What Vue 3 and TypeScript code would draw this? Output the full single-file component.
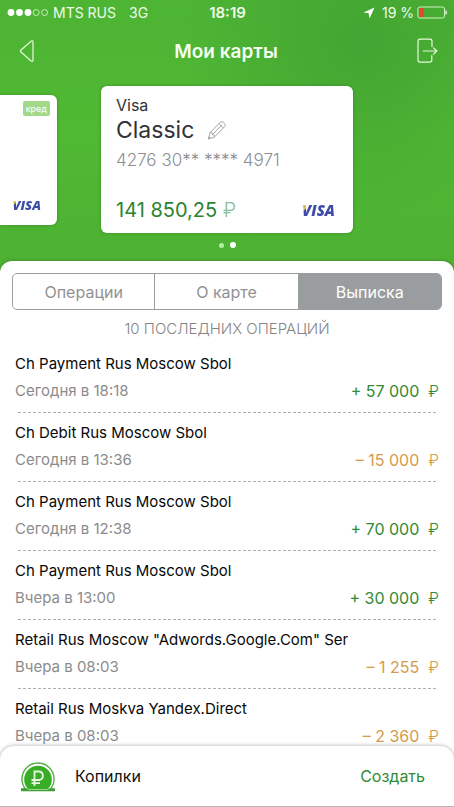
<script setup lang="ts">
import { ref } from 'vue'

interface Operation {
  id: number
  title: string
  time: string
  amount: string
  income: boolean
}

const tabs: string[] = ['Операции', 'О карте', 'Выписка']
const activeTab = ref<string>('Выписка')

const operations: Operation[] = [
  { id: 1, title: 'Ch Payment Rus Moscow Sbol', time: 'Сегодня в 18:18', amount: '+ 57 000', income: true },
  { id: 2, title: 'Ch Debit Rus Moscow Sbol', time: 'Сегодня в 13:36', amount: '– 15 000', income: false },
  { id: 3, title: 'Ch Payment Rus Moscow Sbol', time: 'Сегодня в 12:38', amount: '+ 70 000', income: true },
  { id: 4, title: 'Ch Payment Rus Moscow Sbol', time: 'Вчера в 13:00', amount: '+ 30 000', income: true },
  { id: 5, title: 'Retail Rus Moscow "Adwords.Google.Com" Ser', time: 'Вчера в 08:03', amount: '– 1 255', income: false },
  { id: 6, title: 'Retail Rus Moskva Yandex.Direct', time: 'Вчера в 08:03', amount: '– 2 360', income: false },
]
</script>

<template>
  <div class="app">
    <div class="status">
      <div class="status-left">
        <svg class="signal" width="42" height="9" viewBox="0 0 42 9">
          <g fill="#fff">
            <circle cx="4" cy="4.5" r="3.4" />
            <circle cx="12.5" cy="4.5" r="3.4" />
            <circle cx="21" cy="4.5" r="3.4" />
          </g>
          <g fill="none" stroke="#e4f6dc" stroke-width="0.8">
            <circle cx="29.2" cy="4.5" r="3" />
            <circle cx="37.6" cy="4.5" r="3" />
          </g>
        </svg>
        <span>MTS RUS</span>
        <span class="network">3G</span>
      </div>
      <div class="clock">18:19</div>
      <div class="status-right">
        <svg class="location" width="12" height="12" viewBox="0 0 12 12">
          <path d="M11.5 0.5 L0.5 5.5 L5.6 6.3 L6.6 11.5 Z" fill="#fff" />
        </svg>
        <span>19 %</span>
        <svg width="31" height="13" viewBox="0 0 31 13">
          <rect x="0.9" y="1" width="26.6" height="11" rx="2" fill="none" stroke="#d3efc6" stroke-width="1" />
          <rect x="2" y="2" width="5" height="9" rx="0.8" fill="#e2492f" />
          <path d="M28.8 4.5 Q30.6 6.5 28.8 8.5 Z" fill="#e8f8e1" stroke="#e8f8e1" stroke-width="0.6" />
        </svg>
      </div>
    </div>

    <header class="nav">
      <button class="icon-button" type="button" aria-label="Назад">
        <svg width="16" height="24" viewBox="0 0 16 24">
          <path d="M12.1 2.2 L1.7 11.2 Q1 12 1.7 12.8 L12.1 22 Q14 23 14 21 V3 Q14 1 12.1 2.2 Z" fill="none" stroke="#e6f9dc" stroke-width="1.2" stroke-linejoin="round" />
        </svg>
      </button>
      <h1>Мои карты</h1>
      <button class="icon-button" type="button" aria-label="Выход">
        <svg width="21" height="26" viewBox="0 0 21 26">
          <g fill="none" stroke="#e6f9dc" stroke-width="1.2" stroke-linecap="round" stroke-linejoin="round">
            <path d="M15 8.5 V3.3 Q15 1.2 13 1.2 H3 Q1 1.2 1 3.3 V22 Q1 24.2 3 24.2 H12.6 Q14.8 24.2 14.8 22 V17.5" />
            <path d="M6.3 13 H19.5 M16.6 9.8 L19.8 13 L16.6 16.2" />
          </g>
        </svg>
      </button>
    </header>

    <section class="carousel">
      <article class="card side-card">
        <span class="badge">кред</span>
        <span class="visa visa-small">VISA</span>
      </article>
      <article class="card main-card">
        <div class="brand">Visa</div>
        <div class="name-row">
          <span class="name">Classic</span>
          <button class="edit" type="button" aria-label="Изменить">
            <svg width="20" height="20" viewBox="0 0 20 20">
              <g fill="none" stroke="#a2a7a8" stroke-width="1" stroke-linejoin="round" stroke-linecap="round">
                <path d="M1.5 18.5 L3.2 12.5 L13.3 2.2 Q14.8 1 16.2 2.2 L17.8 3.8 Q19 5.2 17.8 6.6 L7.6 16.8 Z" />
                <path d="M3.2 12.5 L5.2 13 L5.5 14.8 L7.2 15.2 L7.6 16.8 M5.4 14.6 L15 5 M12 3.6 L16.4 8" />
                <path d="M1.5 18.5 L2 16.8 L3.2 18 Z" />
              </g>
            </svg>
          </button>
        </div>
        <div class="number">4276 30** **** 4971</div>
        <div class="balance-row">
          <span class="balance">141 850,25 <span class="currency">₽</span></span>
          <span class="visa">VISA</span>
        </div>
      </article>
    </section>
    <div class="dots"><i></i><i class="current"></i></div>

    <main class="sheet">
      <div class="tabs" role="tablist">
        <button
          v-for="tab in tabs"
          :key="tab"
          type="button"
          role="tab"
          :aria-selected="tab === activeTab"
          :class="{ active: tab === activeTab }"
          @click="activeTab = tab"
        >{{ tab }}</button>
      </div>
      <h2>10 ПОСЛЕДНИХ ОПЕРАЦИЙ</h2>
      <ul>
        <li v-for="op in operations" :key="op.id">
          <div class="title">{{ op.title }}</div>
          <div class="details">
            <span class="time">{{ op.time }}</span>
            <span class="amount" :class="{ income: op.income }">{{ op.amount }}<span class="ruble">₽</span></span>
          </div>
          <svg class="divider" width="100%" height="1">
            <line x1="0" y1="0.5" x2="100%" y2="0.5" stroke="#b0b0b0" stroke-width="1" stroke-dasharray="3 2" />
          </svg>
        </li>
      </ul>
    </main>

    <footer class="savings">
      <svg width="36" height="31" viewBox="0 0 36 31">
        <path d="M5.5 28 A16 16 0 1 1 30.5 28" fill="none" stroke="#55ad45" stroke-width="1.4" />
        <path d="M8.5 28.5 A13.8 13.8 0 1 1 27.5 28.5 Z" fill="#3aad28" />
        <path d="M1 27.3 H6.5 L9 29 H27 L29.5 27.3 H35 V30.3 H1 Z" fill="#3f9f35" />
        <path d="M14.5 25 V10.5 H19.2 A4.3 4.3 0 0 1 19.2 19 H11.5 M11.5 22.2 H20" fill="none" stroke="#e6f8df" stroke-width="1.8" />
      </svg>
      <span class="savings-title">Копилки</span>
      <button class="create" type="button">Создать</button>
    </footer>
  </div>
</template>

<style>
body {
  margin: 0;
}
</style>

<style scoped>
.app {
  display: flex;
  flex-direction: column;
  height: 100vh;
  overflow: hidden;
  font-family: Inter, Roboto, sans-serif;
  background:
    radial-gradient(circle at 80% 5%, #43a532 0, rgba(67, 165, 50, 0) 180px),
    linear-gradient(#4db434, #50b933 130px, #4db133 262px);
}

button {
  padding: 0;
  border: 0;
  background: none;
  font: inherit;
  color: inherit;
  cursor: pointer;
}

svg {
  display: block;
}

.status {
  display: grid;
  grid-template-columns: 1fr auto 1fr;
  align-items: center;
  height: 25px;
  padding: 0 6px 0 7px;
  font-size: 14px;
  color: #effbe9;
}

.status-left,
.status-right {
  display: flex;
  align-items: center;
}

.status-left {
  gap: 4px;
}

.network {
  margin-left: 9px;
}

.status-right {
  justify-content: flex-end;
  gap: 3px;
}

.location {
  margin-right: 4px;
}

.clock {
  font-size: 15px;
  font-weight: 600;
}

.nav {
  display: flex;
  align-items: center;
  justify-content: space-between;
  height: 52px;
  padding: 0 16px 0 19px;
}

.icon-button {
  display: flex;
}

h1 {
  margin: 0;
  font-size: 19px;
  font-weight: 600;
  color: #f4fdf0;
}

.carousel {
  display: grid;
  grid-template-columns: 1fr 252px 1fr;
  column-gap: 44px;
  align-items: center;
  padding-top: 9px;
}

.card {
  display: flex;
  flex-direction: column;
  box-sizing: border-box;
  border-radius: 6px;
  background: #fff;
  box-shadow: 0 0 3px rgba(40, 90, 25, 0.5);
}

.side-card {
  align-items: flex-end;
  justify-content: space-between;
  height: 130px;
  margin-top: 1px;
  padding: 6px 7px 11px 0;
  border-radius: 0 6px 6px 0;
}

.badge {
  padding: 0 3px;
  border-radius: 2px;
  background: #a1d989;
  font-size: 9px;
  line-height: 15px;
  color: #fff;
}

.main-card {
  height: 147px;
  padding: 9px 18px 10px 15px;
}

.brand {
  font-size: 16px;
  line-height: 20px;
  color: #303237;
}

.name-row {
  display: flex;
  align-items: center;
  gap: 13px;
  height: 30px;
}

.name {
  font-size: 23px;
  line-height: 30px;
  color: #303237;
}

.number {
  font-size: 17px;
  font-weight: 300;
  line-height: 30px;
  color: #8a8f91;
}

.balance-row {
  display: flex;
  align-items: center;
  justify-content: space-between;
  margin-top: auto;
}

.balance {
  font-size: 20px;
  line-height: 26px;
  color: #2b8431;
}

.currency {
  font-weight: 300;
  color: #8dbd97;
}

.visa {
  background: linear-gradient(135deg, #e0b65a 22%, #3c4ba5 23%);
  background-clip: text;
  -webkit-background-clip: text;
  font-family: "Open Sans", sans-serif;
  font-size: 15px;
  font-style: italic;
  font-weight: 800;
  line-height: 18px;
  color: transparent;
}

.visa-small {
  margin-right: 9px;
  font-size: 13px;
}

.dots {
  display: flex;
  align-items: center;
  justify-content: center;
  gap: 6px;
  height: 24px;
}

.dots i {
  width: 5px;
  height: 5px;
  border-radius: 50%;
  background: #b5eca0;
}

.dots .current {
  width: 6px;
  height: 6px;
  background: #fff;
}

.sheet {
  flex: 1;
  min-height: 0;
  overflow: hidden;
  margin: 4px 0 -14px;
  border-radius: 12px 12px 0 0;
  background: #fff;
  box-shadow: 0 0 3px rgba(60, 90, 50, 0.7);
}

.tabs {
  display: grid;
  grid-template-columns: 142fr 144fr 144fr;
  height: 37px;
  box-sizing: border-box;
  margin: 12px 12px 0;
  overflow: hidden;
  border: 1px solid #9b9e9f;
  border-radius: 5px;
  font-size: 16px;
  color: #929292;
}

.tabs button + button {
  border-left: 1px solid #9b9e9f;
}

.tabs .active {
  background: #9a9d9f;
  color: #fff;
}

h2 {
  margin: 7px 0 0;
  font-size: 15px;
  font-weight: 300;
  line-height: 24px;
  text-align: center;
  color: #858585;
}

ul {
  margin: 0;
  padding: 9px 15px 0;
  list-style: none;
}

li {
  display: flex;
  flex-direction: column;
  height: 69px;
}

.title {
  font-size: 15px;
  line-height: 28px;
  color: #080808;
}

.details {
  display: flex;
  align-items: center;
  justify-content: space-between;
  height: 25px;
}

.time {
  font-size: 15px;
  color: #8b8b8b;
}

.amount {
  font-size: 16px;
  color: #d59a4c;
}

.amount.income {
  color: #318a36;
}

.ruble {
  margin-left: 9px;
  font-weight: 300;
}

.divider {
  box-sizing: border-box;
  margin-top: 9px;
  padding: 0 3px;
}

.savings {
  display: flex;
  align-items: center;
  position: relative;
  height: 60px;
  padding: 0 29px 0 20px;
  border-bottom: 1px solid #b5b5b5;
  border-radius: 14px 14px 0 0;
  background: #fff;
  box-shadow: 0 0 4px rgba(0, 0, 0, 0.35);
  font-size: 16px;
}

.savings-title {
  flex: 1;
  margin-left: 19px;
  color: #111;
}

.create {
  color: #318a36;
}
</style>
